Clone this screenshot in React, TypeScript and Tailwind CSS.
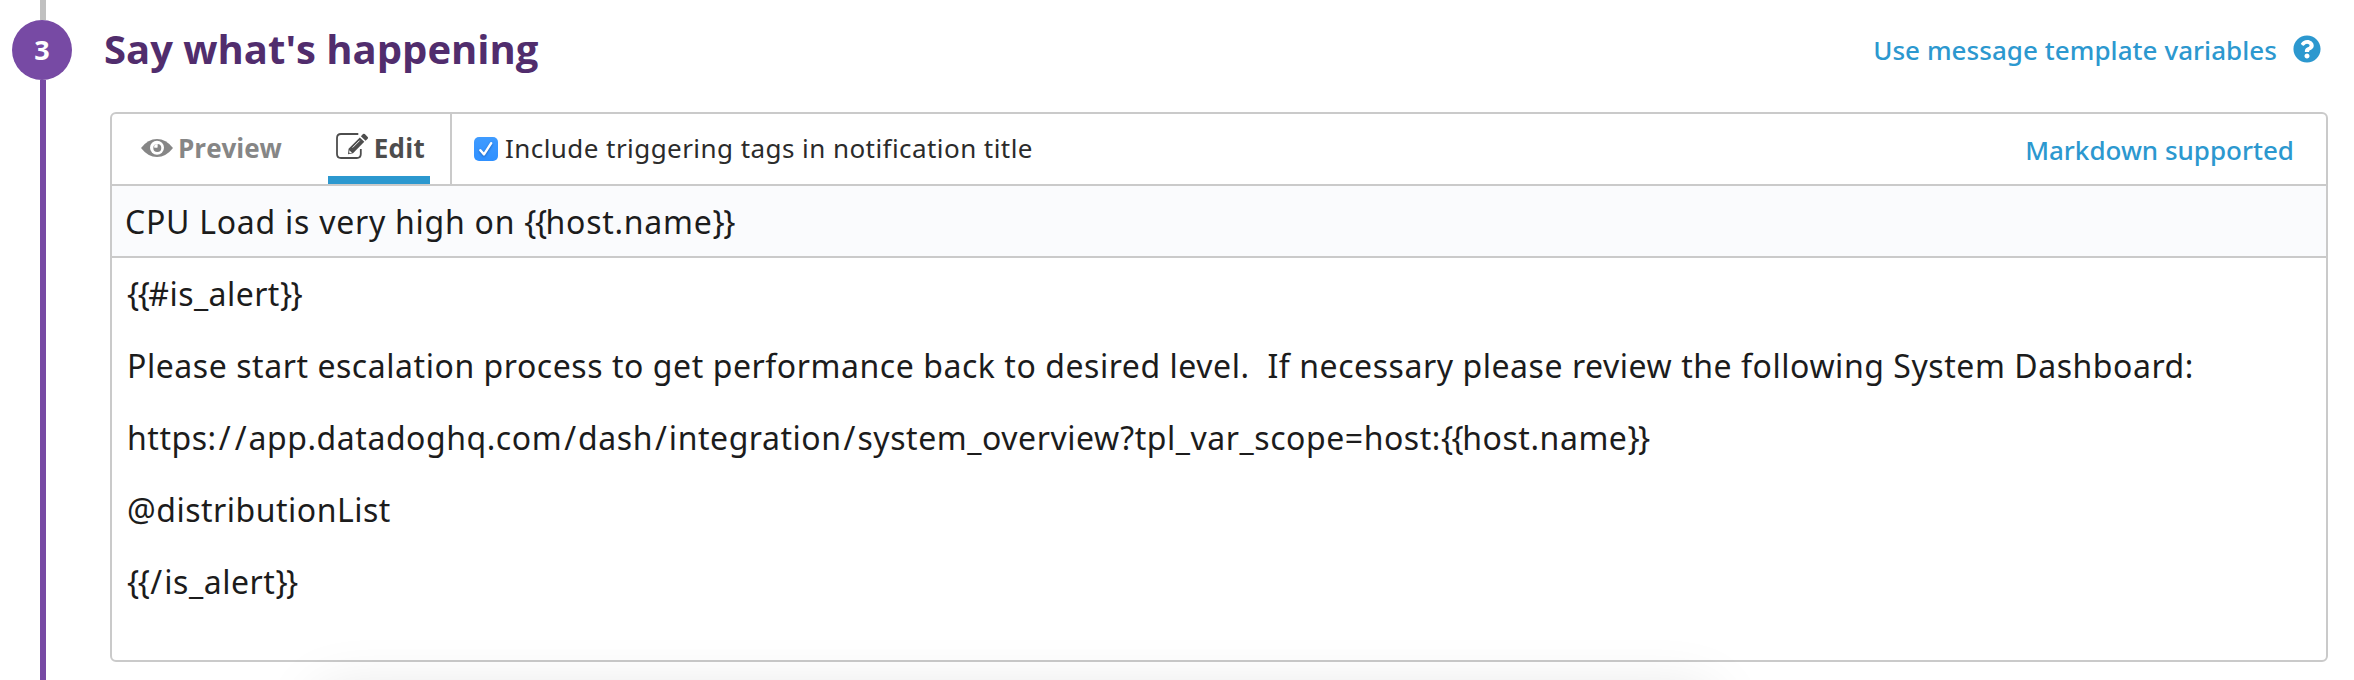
import type { ReactNode } from 'react';
import { FaQuestionCircle } from 'react-icons/fa';

function EyeIcon() {
  return (
    <svg viewBox="0 0 32 18" className="h-[18px] w-8" fill="none">
      <path d="M0 9Q7 0 16 0T32 9Q25 18 16 18T0 9Z" fill="#868686" />
      <circle cx="16" cy="8.7" r="7" fill="#fff" />
      <circle cx="16.3" cy="9" r="4" fill="#868686" />
      <path d="M16.6 5V8.2Q16.2 9 14.8 8.8L13 8.4L13.6 5.6Z" fill="#fff" />
    </svg>
  );
}

function EditIcon() {
  return (
    <svg viewBox="0 0 33 26" className="h-[26px] w-[33px]" fill="none">
      <path
        d="M22.3 1H5Q1 1 1 5V21Q1 25 5 25H20.8Q24.8 25 24.8 21V16"
        stroke="#4d4d4d"
        strokeWidth="1.8"
      />
      <path d="M12 21.2L12.6 15.8L23.8 4.4L28.3 8.8L17 20.2Z" fill="#4d4d4d" />
      <path d="M16.6 14.6L23.6 7.6" stroke="#fff" strokeWidth="0.9" />
      <path d="M13.2 17.2L16 19.8L13.4 20.2Z" fill="#fff" />
      <path d="M24.9 3.2L27 1.1Q27.9 0.2 28.8 1.1L31.7 4Q32.5 4.9 31.7 5.7L29.5 7.8Z" fill="#4d4d4d" />
    </svg>
  );
}

function Checkbox() {
  return (
    <span className="flex h-6 w-6 items-center justify-center rounded-[5px] bg-linear-to-b from-[#3f9bff] to-[#2f90ff]">
      <svg viewBox="0 0 24 24" className="h-6 w-6 drop-shadow-[0_1px_1px_rgba(0,50,120,0.5)]" fill="none">
        <path
          d="M6.4 13.2L10 17.4L17.2 6.2"
          stroke="#fff"
          strokeWidth="2.4"
          strokeLinecap="round"
          strokeLinejoin="round"
        />
      </svg>
    </span>
  );
}

function Template({ text }: { text: string }) {
  return (
    <>
      {text.split(/(\{\{|\}\}|\/)/).map((part, i) => {
        if (part === '/') {
          return (
            <span key={i} className="ml-[2px] tracking-[2px]">
              /
            </span>
          );
        }
        if (part === '{{' || part === '}}') {
          return (
            <span key={i} className="tracking-[-1.5px]">
              {part}
            </span>
          );
        }
        return part;
      })}
    </>
  );
}

function Line({ className, children }: { className: string; children: ReactNode }) {
  return <p className={`h-[72px] whitespace-pre leading-[72px] ${className}`}>{children}</p>;
}

export default function App() {
  return (
    <div className="relative flex h-[680px] w-[2354px] overflow-hidden bg-white font-['Noto_Sans',sans-serif] text-[#1c1c1c]">
      <div className="ml-3 flex w-[60px] shrink-0 flex-col items-center">
        <div className="ml-[2px] h-5 w-[6px] shrink-0 bg-[#c0c0c0]" />
        <div className="flex h-[60px] w-[60px] shrink-0 items-center justify-center rounded-full bg-[#774aa4] font-['Open_Sans',sans-serif] text-[27px] font-bold text-white">
          3
        </div>
        <div className="ml-[2px] w-[6px] flex-1 bg-[#774aa4]" />
      </div>

      <div className="ml-[38px] w-[2218px]">
        <div className="flex h-[112px] items-start justify-between pr-[7px]">
          <h2 className="-ml-[6px] mt-[18px] font-['Open_Sans',sans-serif] text-[40px] font-bold leading-[61px] text-[#512d6d]">
            Say what's happening
          </h2>
          <a className="mt-[28px] flex items-center text-[26px] font-medium leading-[40px] text-[#2c98cf]">
            <span className="mt-[2px] tracking-[0.05px]">Use message template variables</span>
            <FaQuestionCircle className="ml-[16px] size-7" />
          </a>
        </div>

        <div className="h-[550px] rounded-[6px] border-2 border-[#cacaca]">
          <div className="flex h-[72px] border-b-2 border-[#cacaca]">
            <div className="flex w-[340px] border-r-2 border-[#cacaca] font-['Open_Sans',sans-serif] text-[26px] font-bold">
              <div className="ml-[29px] flex items-center text-[#868686]">
                <span className="-mt-[3px]">
                  <EyeIcon />
                </span>
                <span className="-mt-[2px] ml-[5px]">Preview</span>
              </div>
              <div className="ml-[46px] flex w-[102px] items-center border-b-8 border-[#2c98cf] pl-2 pt-2 text-[#4d4d4d]">
                <span className="-mt-[7px]">
                  <EditIcon />
                </span>
                <span className="-mt-[2px] ml-[5px] tracking-[0.2px]">Edit</span>
              </div>
            </div>
            <label className="ml-[22px] flex items-center">
              <Checkbox />
              <span className="-mt-[2px] ml-[7px] text-[26px] tracking-[0.44px] text-[#2b2b2b]">
                Include triggering tags in notification title
              </span>
            </label>
            <a className="ml-auto mr-[32px] mt-[2px] self-center text-[26px] font-medium leading-[36px] text-[#2c98cf]">
              Markdown supported
            </a>
          </div>

          <div className="flex h-[72px] items-center whitespace-pre border-b-2 border-[#cacaca] bg-[#fafbfd] pl-[13px] pt-[2px] text-[32px] tracking-[0.74px]">
            <span>
              <Template text="CPU Load is very high on {{host.name}}" />
            </span>
          </div>

          <div className="pl-[15px] text-[32px]">
            <Line className="tracking-[0.45px]">
              <Template text="{{#is_alert}}" />
            </Line>
            <Line className="tracking-[0.55px]">
              Please start escalation process to get performance back to desired level.{'  '}If necessary please review the following System Dashboard:
            </Line>
            <Line className="tracking-[0.54px]">
              <Template text="https://app.datadoghq.com/dash/integration/system_overview?tpl_var_scope=host:{{host.name}}" />
            </Line>
            <Line className="tracking-[0.5px]">@distributionList</Line>
            <Line className="tracking-[0.55px]">
              <Template text="{{/is_alert}}" />
            </Line>
          </div>
        </div>
      </div>

      <div className="pointer-events-none absolute left-[320px] top-[694px] h-[100px] w-[1390px] shadow-[0_0_60px_rgba(0,0,0,0.125)]" />
    </div>
  );
}
